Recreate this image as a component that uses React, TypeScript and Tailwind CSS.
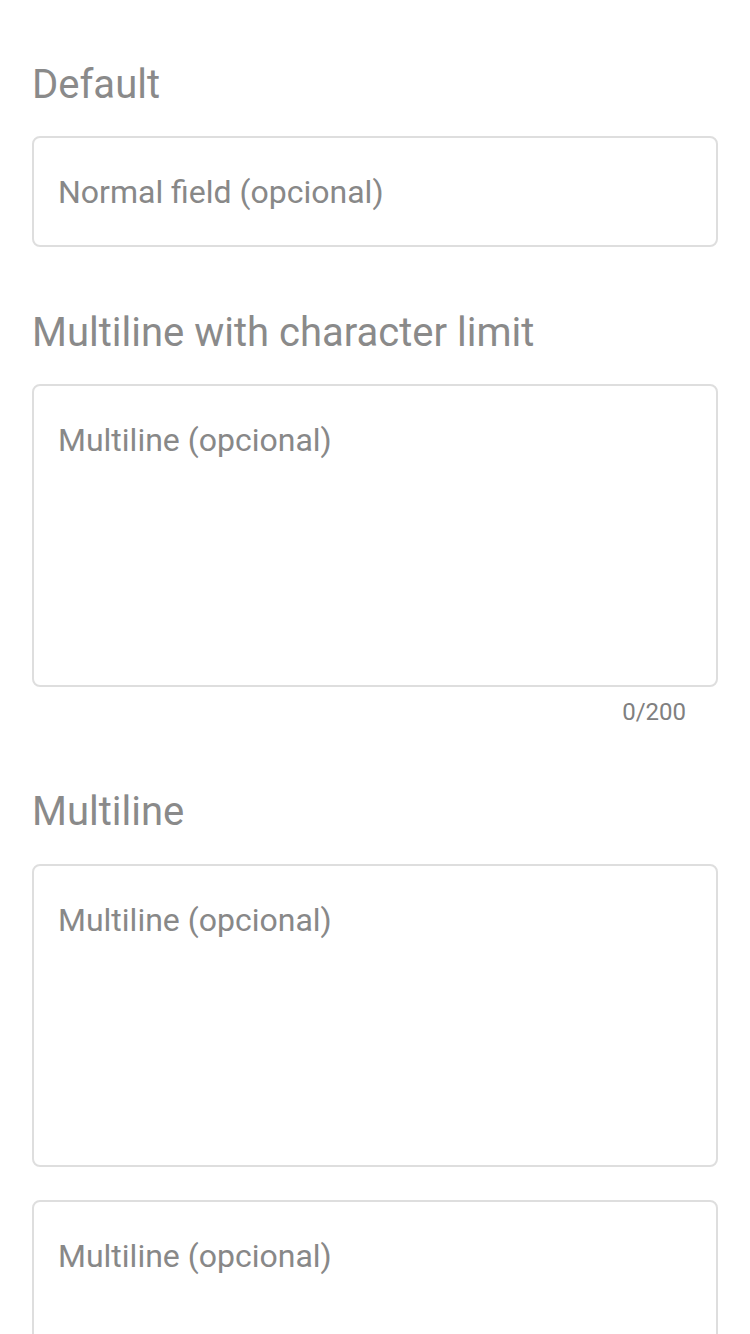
export default function App() {
  const heading = "text-[40px] leading-[48px] text-[#8a8a8a]";
  const field =
    "block w-full rounded-[8px] border-2 border-[#dedede] bg-white px-[24px] text-[32px] leading-[48px] text-[#888888] placeholder:text-[#888888] placeholder:opacity-100 outline-none";

  return (
    <div
      className="min-h-screen bg-white px-[32px] pt-[61px]"
      style={{ fontFamily: "Roboto, 'Noto Sans', Arial, sans-serif" }}
    >
      {/* Default */}
      <h2 className={heading}>Default</h2>
      <input
        className={`${field} mt-[27px] h-[111px]`}
        placeholder="Normal field (opcional)"
      />

      {/* Multiline with character limit */}
      <h2 className={`${heading} mt-[62px]`}>Multiline with character limit</h2>
      <textarea
        className={`${field} mt-[27px] h-[303px] resize-none pt-[30px]`}
        placeholder="Multiline (opcional)"
        maxLength={200}
      />
      <div className="mt-[9px] pr-[32px] text-right text-[24px] leading-[32px] text-[#808080]">
        0/200
      </div>

      {/* Multiline */}
      <h2 className={`${heading} mt-[60px]`}>Multiline</h2>
      <textarea
        className={`${field} mt-[28px] h-[303px] resize-none pt-[30px]`}
        placeholder="Multiline (opcional)"
      />
      <textarea
        className={`${field} mt-[33px] h-[303px] resize-none pt-[30px]`}
        placeholder="Multiline (opcional)"
      />
    </div>
  );
}
